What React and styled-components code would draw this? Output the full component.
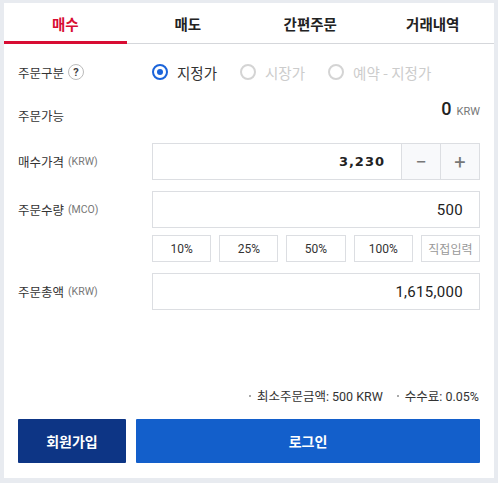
import React, { useState } from 'react';
import styled, { createGlobalStyle } from 'styled-components';

const GlobalStyle = createGlobalStyle`
  body {
    margin: 0;
    background: #e8ebf0;
    font-family: Roboto, "Noto Sans CJK KR", sans-serif;
  }
`;

const Page = styled.div`
  padding: 3px 4px 5px;
`;

const Card = styled.div`
  background: #fff;
  height: 475px;
  display: flex;
  flex-direction: column;
`;

const Tabs = styled.div`
  display: flex;
  border-bottom: 1px solid #d5d7db;
`;

const Tab = styled.div`
  flex: 1;
  height: 41px;
  display: flex;
  align-items: center;
  justify-content: center;
  font-family: "Noto Sans CJK KR", sans-serif;
  font-size: 14.5px;
  font-weight: 700;
  color: ${p => (p.active ? '#d80c33' : '#222')};
  box-shadow: ${p => (p.active ? 'inset 0 -3px 0 #d80c33' : 'none')};
  margin-bottom: -1px;
  cursor: pointer;
`;

const Body = styled.div`
  flex: 1;
  display: flex;
  flex-direction: column;
  padding: 0 14px 15px;
`;

const Row = styled.div`
  display: grid;
  grid-template-columns: 134px 1fr;
  align-items: center;
  min-height: ${p => p.h || 37}px;
  margin-top: ${p => p.mt || 0}px;
`;

const Label = styled.div`
  font-family: "Noto Sans CJK KR", sans-serif;
  font-size: 12.5px;
  color: #333;
  display: flex;
  align-items: center;
  gap: 4px;
  padding-top: ${p => p.pt || 0}px;
`;

const Unit = styled.span`
  font-family: Roboto, sans-serif;
  font-size: 10.5px;
  color: #777;
`;

const Help = styled.span`
  width: 16px;
  height: 16px;
  border: 1px solid #bbb;
  border-radius: 50%;
  box-sizing: border-box;
  font-size: 11px;
  font-weight: 700;
  color: #444;
  display: inline-flex;
  align-items: center;
  justify-content: center;
  font-family: Roboto, sans-serif;
`;

const Radios = styled.div`
  display: flex;
  gap: 23px;
`;

const Radio = styled.div`
  display: flex;
  align-items: center;
  gap: 9px;
  font-family: "Noto Sans CJK KR", sans-serif;
  font-size: 14.5px;
  color: ${p => (p.on ? '#333' : '#ccc')};
`;

const Dot = styled.span`
  width: 16px;
  height: 16px;
  border-radius: 50%;
  box-sizing: border-box;
  border: 2px solid ${p => (p.on ? '#1b64da' : '#d4d4d4')};
  display: inline-flex;
  align-items: center;
  justify-content: center;
  &::after {
    content: '';
    width: 6px;
    height: 6px;
    border-radius: 50%;
    background: ${p => (p.on ? '#1b64da' : 'transparent')};
  }
`;

const Available = styled.div`
  text-align: right;
  align-self: start;
  padding-top: 9px;
  font-size: 18px;
  font-weight: 500;
  color: #222;
  span {
    font-size: 11px;
    color: #777;
    font-weight: 400;
    margin-left: 5px;
  }
`;

const Field = styled.div`
  display: flex;
  height: 37px;
  border: 1px solid #dcdee2;
  box-sizing: border-box;
`;

const Value = styled.div`
  flex: 1;
  display: flex;
  align-items: center;
  justify-content: flex-end;
  padding: 0 16px;
  color: #222;
  font-weight: ${p => (p.bold ? 700 : 400)};
  letter-spacing: ${p => (p.bold ? '1px' : '0.3px')};
  font-family: ${p => (p.bold ? '"DejaVu Sans", sans-serif' : 'Roboto, sans-serif')};
  font-size: ${p => (p.bold ? 13 : 15)}px;
`;

const Step = styled.button`
  width: 39px;
  border: none;
  border-left: 1px solid #dcdee2;
  background: #f8f9fb;
  color: #777;
  font-size: 20px;
  font-family: Roboto, sans-serif;
  display: flex;
  align-items: center;
  justify-content: center;
  padding: 0;
`;

const Percents = styled.div`
  display: grid;
  grid-template-columns: repeat(5, 1fr);
  gap: 8px;
  margin-top: 7px;
`;

const Pct = styled.button`
  height: 27px;
  border: 1px solid #dcdee2;
  background: #fff;
  font-family: ${p => (p.muted ? '"Noto Sans CJK KR", sans-serif' : 'Roboto, sans-serif')};
  font-size: 12px;
  color: ${p => (p.muted ? '#999' : '#333')};
  padding: 0;
`;

const Spacer = styled.div`
  flex: 1;
`;

const Info = styled.div`
  display: flex;
  justify-content: flex-end;
  gap: 14px;
  font-family: Roboto, "Noto Sans CJK KR", sans-serif;
  font-size: 12.5px;
  color: #333;
  margin-bottom: 14px;
  padding-right: 1px;
`;

const InfoItem = styled.span`
  display: flex;
  align-items: center;
  gap: 6px;
  &::before {
    content: '';
    width: 2px;
    height: 2px;
    background: #aaa;
  }
`;

const Buttons = styled.div`
  display: flex;
  gap: 10px;
`;

const Btn = styled.button`
  height: 44px;
  border: none;
  border-radius: 1px;
  color: #fff;
  font-family: "Noto Sans CJK KR", sans-serif;
  font-size: 14px;
  font-weight: 700;
  background: ${p => p.bg};
  width: ${p => (p.grow ? 'auto' : '108px')};
  flex: ${p => (p.grow ? 1 : 'none')};
`;

export default function App() {
  const [tab, setTab] = useState(0);
  const tabs = ['매수', '매도', '간편주문', '거래내역'];

  return (
    <>
      <GlobalStyle />
      <Page>
        <Card>
          <Tabs>
            {tabs.map((t, i) => (
              <Tab key={t} active={i === tab} onClick={() => setTab(i)}>{t}</Tab>
            ))}
          </Tabs>
          <Body>
            <Row h={30} mt={13}>
              <Label>주문구분 <Help>?</Help></Label>
              <Radios>
                <Radio on><Dot on />지정가</Radio>
                <Radio><Dot />시장가</Radio>
                <Radio><Dot />예약 - 지정가</Radio>
              </Radios>
            </Row>
            <Row h={42} mt={2}>
              <Label pt={10}>주문가능</Label>
              <Available>0<span>KRW</span></Available>
            </Row>
            <Row mt={12}>
              <Label>매수가격 <Unit>(KRW)</Unit></Label>
              <Field>
                <Value bold>3,230</Value>
                <Step>−</Step>
                <Step>+</Step>
              </Field>
            </Row>
            <Row mt={11}>
              <Label>주문수량 <Unit>(MCO)</Unit></Label>
              <Field><Value>500</Value></Field>
            </Row>
            <Row h={27}>
              <div />
              <Percents>
                <Pct>10%</Pct>
                <Pct>25%</Pct>
                <Pct>50%</Pct>
                <Pct>100%</Pct>
                <Pct muted>직접입력</Pct>
              </Percents>
            </Row>
            <Row mt={11}>
              <Label>주문총액 <Unit>(KRW)</Unit></Label>
              <Field><Value>1,615,000</Value></Field>
            </Row>
            <Spacer />
            <Info>
              <InfoItem>최소주문금액: 500 KRW</InfoItem>
              <InfoItem>수수료: 0.05%</InfoItem>
            </Info>
            <Buttons>
              <Btn bg="#0d3585">회원가입</Btn>
              <Btn bg="#135fcb" grow>로그인</Btn>
            </Buttons>
          </Body>
        </Card>
      </Page>
    </>
  );
}
